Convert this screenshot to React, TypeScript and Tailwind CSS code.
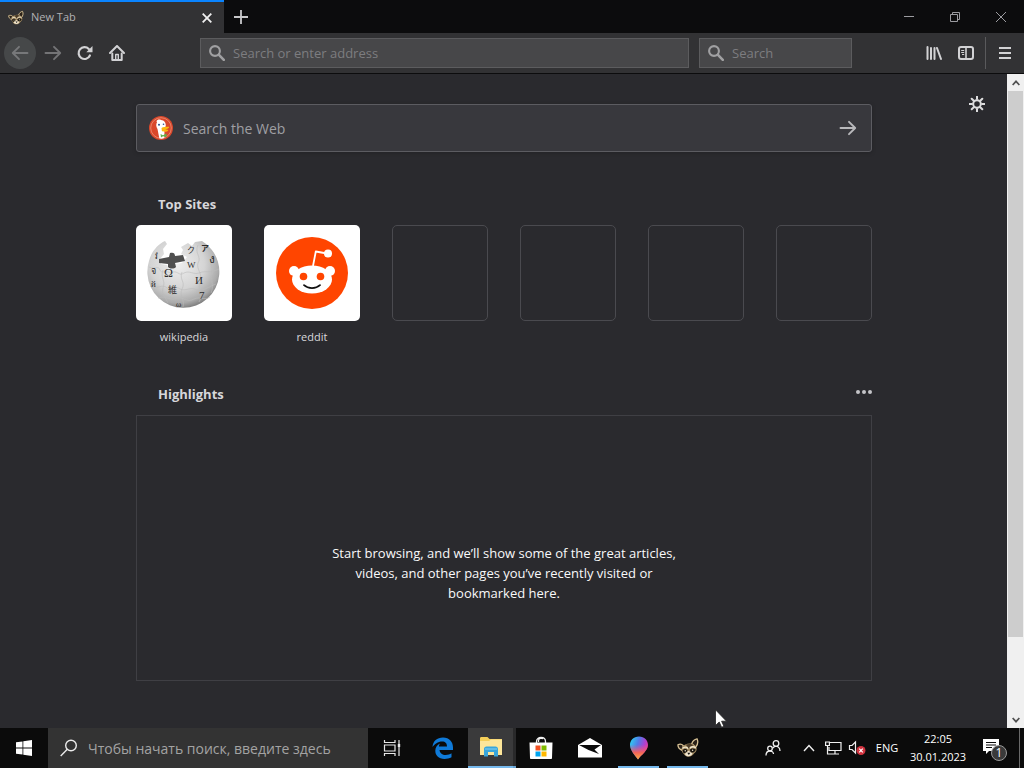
import type { ReactNode } from 'react';

/* ---------- Icons ---------- */

function Raccoon({ size }: { size: number }) {
  return (
    <svg width={size} height={size} viewBox="0 0 24 24" aria-hidden="true">
      <path d="M1 8.500C3 7.500 5.500 8 7 9.500L5.500 14.500C3 13.500 1 11.500 1 8.500Z" fill="#2a2118" stroke="#d9c396" strokeWidth="1.400" />
      <path d="M16 7.500C17 4.500 19 2.500 21.800 2C23.300 5 22.500 8.500 20.500 11Z" fill="#2a2118" stroke="#d9c396" strokeWidth="1.400" />
      <path d="M5.500 11C7.500 8 11 6.800 14.500 7C18 7.200 20.500 9.500 21.500 12.500C21.500 15 20.500 16.500 19 17.500C17.500 20 15 21.500 12.500 21.500C10 21.500 8 20 7 18C5 16.500 4.500 13.500 5.500 11Z" fill="#a58d63" />
      <path d="M9.500 8.500C12 7.300 15.500 7.300 18 9L14 10.500L13 13L11.500 10.500Z" fill="#4a3b28" />
      <path d="M6 12.500C8 10.200 11 10.800 12 12.800" fill="none" stroke="#f3e9d0" strokeWidth="1.400" />
      <path d="M14 12.500C15.500 10.200 18.500 10 20.500 12" fill="none" stroke="#f3e9d0" strokeWidth="1.400" />
      <path d="M6 14.500C7.500 12.500 10.500 12.500 11.500 14.500C11 16.500 9 18 7 17.500Z" fill="#17130e" />
      <path d="M14 14C15.500 12 18.500 12 20.500 13.500C20 16 17.500 17.500 15 16.800Z" fill="#17130e" />
      <circle cx="9" cy="15" r="0.800" fill="#efe3c5" />
      <circle cx="17" cy="14.500" r="0.800" fill="#efe3c5" />
      <path d="M8.500 18.500L12.500 15L17 18C16 20 14.500 21 12.700 21C10.700 21 9.300 20 8.500 18.500Z" fill="#f1e6cf" />
      <path d="M11.200 17.300H14.600L12.900 19.500Z" fill="#17130e" />
    </svg>
  );
}

function SearchGlyph() {
  return (
    <svg width="16" height="16" viewBox="0 0 16 16" fill="none" stroke="#a0a0a2" className="shrink-0" aria-hidden="true">
      <circle cx="6" cy="6" r="4.900" strokeWidth="2.100" />
      <path d="M9.700 9.700L14.800 14.800" strokeWidth="2.600" strokeLinecap="round" />
    </svg>
  );
}

function ArrowGlyph({ color, flip = false }: { color: string; flip?: boolean }) {
  return (
    <svg
      width="18"
      height="16"
      viewBox="0 0 18 16"
      fill="none"
      stroke={color}
      strokeWidth="1.900"
      strokeLinecap="round"
      strokeLinejoin="round"
      className={flip ? 'rotate-180' : ''}
      aria-hidden="true"
    >
      <path d="M1.500 8H16M10 1.800L16.200 8L10 14.200" />
    </svg>
  );
}

function Reload() {
  return (
    <svg width="16" height="16" viewBox="0 0 16 16" fill="none" aria-hidden="true">
      <path d="M12.900 10.500A5.900 5.900 0 1 1 11.800 4" stroke="#d2d2d4" strokeWidth="2.200" strokeLinecap="round" />
      <path d="M15.500 1V7.200H9.300Z" fill="#d2d2d4" />
    </svg>
  );
}

function Home() {
  return (
    <svg width="16" height="16" viewBox="0 0 16 16" fill="none" stroke="#d2d2d4" strokeLinecap="round" strokeLinejoin="round" aria-hidden="true">
      <path d="M1 8L8 1L15 8" strokeWidth="2" />
      <path d="M3.300 8.500V15H12.700V8.500" strokeWidth="2" />
      <path d="M6.700 14.500V9.500H9.300V14.500" strokeWidth="1.400" />
    </svg>
  );
}

function Library() {
  return (
    <svg width="16" height="16" viewBox="0 0 16 16" fill="none" stroke="#d2d2d4" strokeWidth="2" strokeLinecap="round" aria-hidden="true">
      <path d="M1.500 2V14M5 3V14M8.500 3V14M11 3L15 14" />
    </svg>
  );
}

function Sidebar() {
  return (
    <svg width="16" height="16" viewBox="0 0 16 16" fill="none" stroke="#d2d2d4" aria-hidden="true">
      <rect x="1" y="2" width="14" height="12" rx="2" strokeWidth="2" />
      <path d="M8 2V14" strokeWidth="1.600" />
      <path d="M3.200 5.500H6.200M3.200 7.500H6.200M4 9.500H6.200" strokeWidth="1" />
    </svg>
  );
}

function Gear() {
  return (
    <svg width="16" height="16" viewBox="0 0 16 16" fill="none" stroke="#dededf" aria-hidden="true">
      <circle cx="8" cy="8" r="3.800" strokeWidth="2" />
      <path d="M8 0.500V3M8 13V15.500M0.500 8H3M13 8H15.500M2.700 2.700L4.500 4.500M11.500 11.500L13.300 13.300M2.700 13.300L4.500 11.500M11.500 4.500L13.300 2.700" strokeWidth="2" strokeLinecap="round" />
    </svg>
  );
}

function DuckLogo() {
  return (
    <svg width="24" height="24" viewBox="0 0 24 24" aria-hidden="true">
      <circle cx="12" cy="12" r="12" fill="#d9472b" />
      <circle cx="12" cy="12" r="10.300" fill="none" stroke="#e88a70" strokeWidth="0.900" />
      <path d="M7.500 5.500C8 3.500 10.500 3 12 4C15 4.200 17 6.500 16.800 9.500L15.500 15L15.300 22C13.500 22.800 11.500 22.800 10.300 22.200L8.500 13C7 10.500 6.800 8 8 6.500Z" fill="#fff" />
      <circle cx="10" cy="8.800" r="1" fill="#2d4f8e" />
      <circle cx="14.500" cy="8.200" r="0.800" fill="#2d4f8e" />
      <path d="M12.500 12C14 10.500 17 11 20 10.700C20.500 12 18 13 16 13.300C18 13.700 19 13.600 19.300 14.200C18.500 16 14 16.200 12.800 14.800Z" fill="#fbb70f" />
      <path d="M11.500 18L14 19.200L17.500 17.500V21L14 20.200L12 21.500Z" fill="#5fb34a" />
    </svg>
  );
}

function WikipediaLogo() {
  return (
    <svg width="96" height="96" viewBox="0 0 96 96" aria-hidden="true">
      <defs>
        <radialGradient id="globe" cx="0.420" cy="0.350" r="0.680">
          <stop offset="0" stopColor="#eeeeee" />
          <stop offset="0.550" stopColor="#d4d4d4" />
          <stop offset="0.850" stopColor="#aaaaaa" />
          <stop offset="1" stopColor="#777777" />
        </radialGradient>
      </defs>
      <path
        d="M29 16L31 19L27 24L28 29L24 34L25 39L31 40L33 44L38 43L39 39L46 38L51 32L45 29L47 25L45 22L52 18L56 21L59 17L66 16A36 36 0 1 1 13 36C15 27 22 19 29 16Z"
        fill="url(#globe)"
      />
      <path d="M23 34L33 32L34 28C37 27 39 28 39 31L47 30L49 36L39 38L40 42C38 44 34 44 32 42L32 39L23 38Z" fill="#4f4f4f" />
      <g fill="none" stroke="#bcbcbc" strokeWidth="0.600">
        <path d="M13 42C20 45 22 40 24 45C25 49 30 45 35 48C41 44 43 52 48 48C54 45 57 50 63 48C70 45 73 49 83 44" />
        <path d="M14 61C23 65 26 58 31 63C36 66 39 60 44 64C50 67 54 61 61 65C68 66 72 62 80 59" />
        <path d="M22 73C31 70 34 77 41 73C48 72 51 78 58 74C64 71 68 76 74 72" />
        <path d="M27 45C24 53 30 55 27 63C25 70 30 73 32 78M46 47C43 55 50 57 46 64C43 71 49 75 47 82M62 20C58 28 66 32 62 38C60 44 67 49 64 56C61 64 68 69 63 77M77 30C72 38 78 43 76 50C75 58 78 61 75 68" />
      </g>
      <g fill="#2c2c2c" fontFamily="'Liberation Serif', 'Noto Sans CJK JP', serif">
        <text x="28" y="52" fontSize="12">Ω</text>
        <text x="51" y="43" fontSize="9">W</text>
        <text x="59" y="59" fontSize="11">И</text>
        <text x="32" y="68" fontSize="9">維</text>
        <text x="63" y="74" fontSize="11">7</text>
        <text x="73" y="38" fontSize="12">ง</text>
        <text x="65" y="26" fontSize="8" fontWeight="bold">ア</text>
        <text x="51" y="28" fontSize="8">ク</text>
        <text x="15" y="49" fontSize="9">จ</text>
        <text x="15" y="62" fontSize="9">й</text>
        <text x="19" y="34" fontSize="9">វ</text>
        <text x="40" y="82" fontSize="8">ω</text>
      </g>
    </svg>
  );
}

function RedditLogo() {
  return (
    <svg width="96" height="96" viewBox="0 0 96 96" aria-hidden="true">
      <circle cx="48" cy="48" r="36" fill="#ff4500" />
      <circle cx="30" cy="46" r="5" fill="#fff" />
      <circle cx="66" cy="46" r="5" fill="#fff" />
      <ellipse cx="48" cy="54.500" rx="20" ry="14" fill="#fff" />
      <path d="M49 41L51.800 26.500L63 28.500" fill="none" stroke="#fff" strokeWidth="1.800" strokeLinejoin="round" />
      <circle cx="64" cy="28.500" r="4" fill="#fff" />
      <circle cx="39.500" cy="51.500" r="3.800" fill="#ff4500" />
      <circle cx="56.500" cy="51.500" r="3.800" fill="#ff4500" />
      <path d="M40 60.200C44 64 52 64 56 60.200" fill="none" stroke="#111" strokeWidth="1.800" strokeLinecap="round" />
    </svg>
  );
}

function TaskView() {
  return (
    <svg width="18" height="18" viewBox="0 0 18 18" fill="none" stroke="#e8e8e8" strokeWidth="1.200" aria-hidden="true">
      <path d="M1.500 1V3.500H12V1M1.500 17V14.500H12V17M1.500 6H12V12H1.500ZM16 1V17" />
      <path d="M14.800 5H17.200V8H14.800Z" fill="#e8e8e8" stroke="none" />
    </svg>
  );
}

function EdgeLogo() {
  return (
    <svg width="22" height="22" viewBox="0 0 22 22" aria-hidden="true">
      <path
        d="M0.500 10C1 4 5 0.500 11 0.500C17.500 0.500 21 5 21 10.500V13H7.500C8 16.500 10.500 18 13.500 18C16 18 18 17.300 19.500 16.300V20.300C17.500 21.300 15 21.900 12.500 21.900C6.500 21.900 3.300 18.300 3.300 13.800C3.300 10.500 5 8 8 6.500C7.300 7.500 7 8.600 6.900 9.500H15C15 6.500 13.500 4.500 10 4.500C6 4.500 2.500 7 0.500 10Z"
        fill="#0f7ad8"
      />
    </svg>
  );
}

function Folder() {
  return (
    <svg width="22" height="20" viewBox="0 0 22 20" aria-hidden="true">
      <path d="M0 1.500C0 0.700 0.500 0 1.300 0H7.500L9.500 2H22V18H0Z" fill="#f5cf59" />
      <path d="M0 4H9L11 2.500H22V18H0Z" fill="#fde69a" />
      <path d="M4 19.500V12C4 10.500 5 9.500 6.500 9.500H15.500C17 9.500 18 10.500 18 12V19.500H14V15H8V19.500Z" fill="#39a6dc" />
      <path d="M5 12H17" stroke="#8bd2ef" strokeWidth="1" />
    </svg>
  );
}

function Store() {
  return (
    <svg width="24" height="24" viewBox="0 0 24 24" aria-hidden="true">
      <path d="M7.500 7V5.500C7.500 0 16.500 0 16.500 5.500V7M9.500 6V4.500C9.500 2.500 13 1.500 14 3" fill="none" stroke="#f2f2f2" strokeWidth="1.300" />
      <path d="M0.500 6.500H23.500L23 22C23 22.700 22.500 23 22 23H2C1.500 23 1 22.700 1 22Z" fill="#fff" />
      <path d="M6.500 9.500H11.500V14.500H6.500Z" fill="#f25022" />
      <path d="M12.500 9.500H17.500V14.500H12.500Z" fill="#7fba00" />
      <path d="M6.500 15.500H11.500V20.500H6.500Z" fill="#00a4ef" />
      <path d="M12.500 15.500H17.500V20.500H12.500Z" fill="#ffb900" />
    </svg>
  );
}

function Mail() {
  return (
    <svg width="24" height="20" viewBox="0 0 24 20" aria-hidden="true">
      <path d="M0 7L12 0L24 7V19.500H0Z" fill="#fff" />
      <path d="M1 7H23L16.500 11.500L21 16L10.500 12Z" fill="#0b0b0b" />
    </svg>
  );
}

function Paint3D() {
  return (
    <svg width="20" height="24" viewBox="0 0 20 24" aria-hidden="true">
      <defs>
        <linearGradient id="drop" x1="0" y1="0.200" x2="1" y2="0.600">
          <stop offset="0" stopColor="#2fd0f2" />
          <stop offset="0.400" stopColor="#4f7de8" />
          <stop offset="0.750" stopColor="#b13fd0" />
          <stop offset="1" stopColor="#ee3f8b" />
        </linearGradient>
        <linearGradient id="tip" x1="0" y1="0" x2="0" y2="1">
          <stop offset="0.350" stopColor="#f04f8d" stopOpacity="0" />
          <stop offset="0.700" stopColor="#f2635a" />
          <stop offset="1" stopColor="#f9b23d" />
        </linearGradient>
      </defs>
      <path d="M10 0.500C15.500 0.500 19 4.500 19 9C19 14.500 12 19 9 23.500C6.500 20 1 14.500 1 9C1 4.500 4.500 0.500 10 0.500Z" fill="url(#drop)" />
      <path d="M10 0.500C15.500 0.500 19 4.500 19 9C19 14.500 12 19 9 23.500C6.500 20 1 14.500 1 9C1 4.500 4.500 0.500 10 0.500Z" fill="url(#tip)" />
    </svg>
  );
}

function People() {
  return (
    <svg width="16" height="16" viewBox="0 0 16 16" fill="none" stroke="#f0f0f0" strokeWidth="1.300" aria-hidden="true">
      <circle cx="5" cy="8.500" r="2.300" />
      <path d="M1 15.500C1 12.500 3 11 5 11C7 11 8.500 12.500 8.500 14" />
      <circle cx="11" cy="3.500" r="2.800" />
      <path d="M7.800 8C9.500 6 12 6 13.500 7.200C14.600 8 15 9.500 15 11" />
    </svg>
  );
}

function Network() {
  return (
    <svg width="17" height="14" viewBox="0 0 17 14" fill="none" stroke="#f0f0f0" strokeWidth="1.200" aria-hidden="true">
      <path d="M5 1.500H16V9.500H4V6M10 9.500V13M6 13H14M0.600 1H4.400V4.500H0.600ZM2.500 4.500V13H6" />
    </svg>
  );
}

function Volume() {
  return (
    <svg width="18" height="16" viewBox="0 0 18 16" aria-hidden="true">
      <path d="M1.500 5.500H4L7.500 2V13L4 9.500H1.500Z" fill="none" stroke="#f0f0f0" strokeWidth="1.200" />
      <circle cx="13" cy="10.500" r="4.500" fill="#d1333f" />
      <path d="M11.200 8.700L14.800 12.300M14.800 8.700L11.200 12.300" stroke="#fff" strokeWidth="1.200" />
    </svg>
  );
}

function Chevron({ down = false, small = false, color }: { down?: boolean; small?: boolean; color: string }) {
  return (
    <svg
      width={small ? 8 : 12}
      height={small ? 6 : 8}
      viewBox="0 0 12 8"
      fill="none"
      stroke={color}
      strokeWidth={small ? 2.6 : 1.4}
      className={down ? 'rotate-180' : ''}
      aria-hidden="true"
    >
      <path d="M1 7L6 1.500L11 7" />
    </svg>
  );
}

/* ---------- Browser ---------- */

function TabStrip() {
  return (
    <div className="flex h-[33px] shrink-0 bg-[#0c0c0d]">
      <div className="flex w-56 items-center border-t-2 border-[#0a84ff] bg-[#323234] pr-2 pl-2">
        <Raccoon size={16} />
        <span className="ml-[7px] flex-1 text-[11px] text-[#b1b1b3]">New Tab</span>
        <button aria-label="Close tab" className="flex size-[18px] items-center justify-center">
          <svg width="10" height="10" viewBox="0 0 10 10" stroke="#f0f0f0" strokeWidth="1.800">
            <path d="M0.700 0.700L9.300 9.300M9.300 0.700L0.700 9.300" />
          </svg>
        </button>
      </div>
      <button aria-label="New tab" className="flex w-[34px] items-center justify-center">
        <svg width="14" height="14" viewBox="0 0 14 14" stroke="#c8c8ca" strokeWidth="1.800">
          <path d="M7 0V14M0 7H14" />
        </svg>
      </button>
      <div className="ml-auto flex">
        <button aria-label="Minimize" className="flex w-[46px] items-center justify-center">
          <svg width="10" height="10" viewBox="0 0 10 10" stroke="#9c9ca0">
            <path d="M0 4.500H10" />
          </svg>
        </button>
        <button aria-label="Restore" className="flex w-[46px] items-center justify-center">
          <svg width="10" height="10" viewBox="0 0 10 10" fill="none" stroke="#9c9ca0">
            <path d="M0.500 2.500H7.500V9.500H0.500ZM2.500 2.500V0.500H9.500V7.500H7.500" />
          </svg>
        </button>
        <button aria-label="Close" className="flex w-[46px] items-center justify-center">
          <svg width="10" height="10" viewBox="0 0 10 10" stroke="#9c9ca0">
            <path d="M0 0L10 10M10 0L0 10" />
          </svg>
        </button>
      </div>
    </div>
  );
}

function ToolButton({ label, children, round = false }: { label: string; children: ReactNode; round?: boolean }) {
  return (
    <button
      aria-label={label}
      className={`flex size-8 shrink-0 items-center justify-center ${round ? 'mr-px rounded-full bg-[#464849]' : ''}`}
    >
      {children}
    </button>
  );
}

function Toolbar() {
  return (
    <div className="flex h-[41px] shrink-0 items-center border-b border-[#0c0c0d] bg-[#323234] pr-[3px] pl-1">
      <ToolButton label="Back" round>
        <ArrowGlyph color="#77787a" flip />
      </ToolButton>
      <ToolButton label="Forward">
        <ArrowGlyph color="#747476" />
      </ToolButton>
      <ToolButton label="Reload">
        <Reload />
      </ToolButton>
      <ToolButton label="Home">
        <Home />
      </ToolButton>

      <label className="mr-[10px] ml-[67px] flex h-[30px] flex-1 items-center border border-[#5c5c5e] bg-[#474749] px-2">
        <SearchGlyph />
        <input
          type="text"
          aria-label="Address"
          placeholder="Search or enter address"
          className="ml-2 w-full min-w-0 bg-transparent pt-0.5 text-[13px] text-white outline-none placeholder:text-[#7d7d80]"
        />
      </label>
      <label className="mr-[66px] flex h-[30px] w-[153px] items-center border border-[#5c5c5e] bg-[#474749] px-2">
        <SearchGlyph />
        <input
          type="text"
          aria-label="Search"
          placeholder="Search"
          className="ml-2 w-full min-w-0 bg-transparent pt-0.5 text-[13px] text-white outline-none placeholder:text-[#7d7d80]"
        />
      </label>

      <ToolButton label="Library">
        <Library />
      </ToolButton>
      <ToolButton label="Sidebars">
        <Sidebar />
      </ToolButton>
      <div className="mx-[3px] h-8 w-px bg-[#5a5a5c]" />
      <ToolButton label="Menu">
        <svg width="12" height="12" viewBox="0 0 12 12" stroke="#d2d2d4" strokeWidth="2">
          <path d="M0 1H12M0 6H12M0 11H12" />
        </svg>
      </ToolButton>
    </div>
  );
}

const sites = [
  { name: 'wikipedia', logo: <WikipediaLogo /> },
  { name: 'reddit', logo: <RedditLogo /> },
];

function TopSites() {
  return (
    <section className="mt-[42px]">
      <h2 className="pl-[22px] text-[13px] leading-5 font-bold text-[#d7d7db]">Top Sites</h2>
      <ul className="mt-[11px] flex justify-between">
        {sites.map((site) => (
          <li key={site.name}>
            <a href="#" className="block w-24 text-center">
              <span className="block size-24 overflow-hidden rounded-[5px] bg-white">{site.logo}</span>
              <span className="mt-1.5 block text-[11px] leading-5 font-medium text-[#d7d7db]">{site.name}</span>
            </a>
          </li>
        ))}
        {[0, 1, 2, 3].map((slot) => (
          <li key={slot} className="size-24 rounded-[5px] border border-[#4a4a4f]" />
        ))}
      </ul>
    </section>
  );
}

function Highlights() {
  return (
    <section className="mt-[37px]">
      <div className="flex justify-between">
        <h2 className="pl-[22px] text-[13px] leading-5 font-bold text-[#d7d7db]">Highlights</h2>
        <button aria-label="Open menu" className="flex h-4 items-center">
          <svg width="16" height="4" viewBox="0 0 16 4" fill="#c4c4c8">
            <circle cx="2" cy="2" r="2" />
            <circle cx="8" cy="2" r="2" />
            <circle cx="14" cy="2" r="2" />
          </svg>
        </button>
      </div>
      <div className="mt-[11px] flex h-[266px] justify-center border border-[#3f3f44] pt-[127px]">
        <p className="text-center text-[13px] leading-5 text-[#f9f9fa]">
          Start browsing, and we’ll show some of the great articles,
          <br />
          videos, and other pages you’ve recently visited or
          <br />
          bookmarked here.
        </p>
      </div>
    </section>
  );
}

function NewTabPage() {
  return (
    <main className="relative flex-1 overflow-hidden bg-[#2a2a2e] pt-[30px] pl-px">
      <button aria-label="Settings" className="absolute top-[14px] right-[14px] flex size-8 items-center justify-center">
        <Gear />
      </button>
      <div className="mx-auto w-[736px]">
        <form className="flex h-12 items-center rounded-[3px] border border-[#5c5c61] bg-[#38383d] pr-[14px] pl-3 shadow-[0_1px_4px_rgba(0,0,0,0.2)]">
          <DuckLogo />
          <input
            type="text"
            aria-label="Search the Web"
            placeholder="Search the Web"
            className="ml-[10px] min-w-0 flex-1 bg-transparent text-[14px] text-white outline-none placeholder:text-[#9f9fa3]"
          />
          <button type="button" aria-label="Submit search">
            <ArrowGlyph color="#b8b8bb" />
          </button>
        </form>
        <TopSites />
        <Highlights />
      </div>
    </main>
  );
}

function Scrollbar() {
  return (
    <div className="flex w-[17px] shrink-0 flex-col bg-[#f0f0f0]">
      <button aria-label="Scroll up" className="flex h-[17px] items-center justify-center">
        <Chevron small color="#505050" />
      </button>
      <div className="flex-1 px-px">
        <div className="h-[88%] bg-[#cdcdcd]" />
      </div>
      <button aria-label="Scroll down" className="flex h-[17px] items-center justify-center">
        <Chevron small down color="#505050" />
      </button>
    </div>
  );
}

/* ---------- Taskbar ---------- */

function TaskButton({ label, children, open = false }: { label: string; children: ReactNode; open?: boolean }) {
  return (
    <button aria-label={label} className="relative flex w-[49px] items-center justify-center">
      {children}
      {open && <span className="absolute inset-x-1 bottom-0 h-0.5 bg-[#76b9ed]" />}
    </button>
  );
}

function Taskbar() {
  return (
    <footer className="flex h-10 shrink-0 bg-[#0b0b0b] text-[11px] text-white">
      <button aria-label="Start" className="flex w-12 items-center justify-center">
        <svg width="16" height="16" viewBox="0 0 16 16" fill="#fff">
          <path d="M0 2.300L6.500 1.400V7.600H0ZM7.300 1.300L16 0V7.600H7.300ZM0 8.400H6.500V14.600L0 13.700ZM7.300 8.400H16V16L7.300 14.800Z" />
        </svg>
      </button>
      <label className="flex w-80 items-center bg-[#333333] pl-3">
        <svg width="18" height="18" viewBox="0 0 18 18" fill="none" stroke="#ececec" strokeWidth="1.400" className="shrink-0" aria-hidden="true">
          <circle cx="11" cy="6.500" r="5.300" />
          <path d="M7.300 10.300L0.700 17" />
        </svg>
        <input
          type="text"
          aria-label="Поиск"
          placeholder="Чтобы начать поиск, введите здесь"
          className="ml-[10px] w-full min-w-0 bg-transparent text-[14px] outline-none placeholder:text-[#a3a3a3]"
        />
      </label>
      <button aria-label="Task view" className="mr-0.5 flex w-12 items-center justify-center">
        <TaskView />
      </button>
      <TaskButton label="Edge">
        <EdgeLogo />
      </TaskButton>
      <button aria-label="Explorer" className="flex w-[49px] pl-px">
        <span className="flex h-10 w-[45px] items-center justify-center border-b-2 border-[#76b9ed] bg-[#3a3a3b]">
          <Folder />
        </span>
        <span className="h-10 w-[3px] border-b-2 border-[#6aa3d0] bg-[#29292a]" />
      </button>
      <TaskButton label="Store">
        <Store />
      </TaskButton>
      <TaskButton label="Mail">
        <Mail />
      </TaskButton>
      <TaskButton label="Paint 3D" open>
        <Paint3D />
      </TaskButton>
      <TaskButton label="Browser" open>
        <Raccoon size={22} />
      </TaskButton>

      <div className="ml-auto flex">
        <button aria-label="People" className="flex w-12 items-center justify-center">
          <People />
        </button>
        <button aria-label="Hidden icons" className="flex w-6 items-center justify-center">
          <Chevron color="#f0f0f0" />
        </button>
        <button aria-label="Network" className="flex w-6 items-center justify-center">
          <Network />
        </button>
        <button aria-label="Volume" className="flex w-6 items-center justify-center">
          <Volume />
        </button>
        <button className="w-9">ENG</button>
        <button className="w-[66px] text-center leading-[18px]">
          <span className="block">22:05</span>
          <span className="block">30.01.2023</span>
        </button>
        <button aria-label="Notifications" className="flex w-12 items-center justify-center">
          <svg width="26" height="26" viewBox="0 0 26 26" aria-hidden="true">
            <path d="M1 4H17V16H7L4 19V16H1Z" fill="#fff" />
            <path d="M4 7.500H14M4 10H14M4 12.500H10" stroke="#0b0b0b" strokeWidth="1" />
            <circle cx="17" cy="18" r="7.500" fill="#3a3a3a" stroke="#9a9a9a" />
            <text x="17" y="22" fontSize="12" fill="#fff" textAnchor="middle">1</text>
          </svg>
        </button>
        <button aria-label="Show desktop" className="w-[5px] border-l border-[#6a6a6a]" />
      </div>
    </footer>
  );
}

export default function App() {
  return (
    <div className="relative flex h-screen flex-col overflow-hidden bg-[#2a2a2e] font-['Open_Sans','Noto_Sans','Noto_Sans_CJK_JP',sans-serif]">
      <TabStrip />
      <Toolbar />
      <div className="flex min-h-0 flex-1">
        <NewTabPage />
        <Scrollbar />
      </div>
      <Taskbar />

      {/* mouse pointer */}
      <svg width="12" height="19" viewBox="0 0 12 19" className="absolute top-[709px] left-[715px]" aria-hidden="true">
        <path d="M0.500 0.800V16.500L4.200 13L6.600 18.300L8.900 17.300L6.600 12.200H11.500Z" fill="#fff" stroke="#222" strokeWidth="0.800" />
      </svg>
    </div>
  );
}
